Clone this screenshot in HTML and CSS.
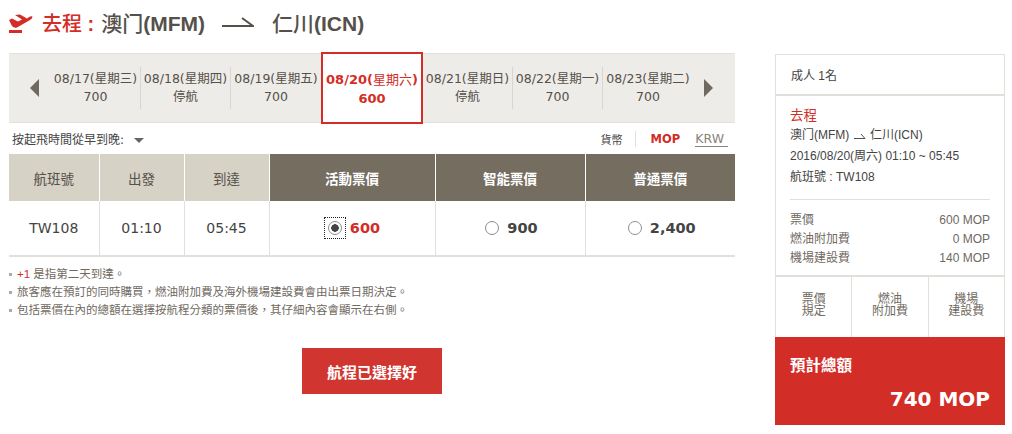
FILE: index.html
```html
<!DOCTYPE html>
<html lang="zh-Hant">

<head>
    <meta charset="UTF-8">
    <title>Select flight</title>
    <link rel="stylesheet" href="styles.css">
</head>

<body>
    <div class="page">
        <h1 class="route">
            <svg class="plane" width="24" height="22" viewBox="0 0 24 22">
                <path fill="#d32d27" d="M0 9 L3 7.500 L9 10.500 L13 8.500 L6 4 L11 3.500 L18 7.500 L21 5.500 Q23.500 4.800 23.500 6 Q23.500 7.500 21 9 L8 16.500 Q5 17.500 3 15 Z" />
                <rect fill="#d32d27" x="0" y="19" width="13" height="3" />
            </svg>
            <span class="route-label"><span class="cjk">去程</span> <b>:</b></span>
            <span class="route-city"><span class="cjk">澳门</span>(MFM)</span>
            <svg class="route-arrow" width="32" height="12" viewBox="0 0 32 12">
                <path fill="none" stroke="#55504a" stroke-width="2" d="M0 10 H31 L20 2" />
            </svg>
            <span class="route-city"><span class="cjk">仁川</span>(ICN)</span>
        </h1>

        <div class="columns">
            <div class="main">
                <div class="dates">
                    <div class="arrow arrow-left"></div>
                    <div class="date">08/17(<span class="wk">星期三</span>)<br>700</div>
                    <div class="date">08/18(<span class="wk">星期四</span>)<br><span class="wk">停航</span></div>
                    <div class="date">08/19(<span class="wk">星期五</span>)<br>700</div>
                    <div class="date date-active">08/20(<span class="wk">星期六</span>)<br>600</div>
                    <div class="date">08/21(<span class="wk">星期日</span>)<br><span class="wk">停航</span></div>
                    <div class="date">08/22(<span class="wk">星期一</span>)<br>700</div>
                    <div class="date">08/23(<span class="wk">星期二</span>)<br>700</div>
                    <div class="arrow arrow-right"></div>
                </div>

                <div class="tools">
                    <div class="sort">按起飛時間從早到晚: <span class="caret"></span></div>
                    <div class="currency">
                        <span class="currency-label">貨幣</span>
                        <span class="currency-on">MOP</span>
                        <span class="currency-off">KRW</span>
                    </div>
                </div>

                <table class="flights">
                    <tr>
                        <th class="col-no">航班號</th>
                        <th class="col-time">出發</th>
                        <th class="col-time">到達</th>
                        <th class="fare col-event">活動票價</th>
                        <th class="fare col-smart">智能票價</th>
                        <th class="fare col-normal">普通票價</th>
                    </tr>
                    <tr>
                        <td>TW108</td>
                        <td>01:10</td>
                        <td>05:45</td>
                        <td>
                            <div class="fare-cell"><span class="radio-focus"><span class="radio radio-on"></span></span><b class="price price-red">600</b></div>
                        </td>
                        <td>
                            <div class="fare-cell"><span class="radio"></span><b class="price">900</b></div>
                        </td>
                        <td>
                            <div class="fare-cell"><span class="radio"></span><b class="price">2,400</b></div>
                        </td>
                    </tr>
                </table>

                <ul class="notes">
                    <li><span class="plus">+1</span> 是指第二天到達。</li>
                    <li>旅客應在預訂的同時購買，燃油附加費及海外機場建設費會由出票日期決定。</li>
                    <li>包括票價在內的總額在選擇按航程分類的票價後，其仔細內容會顯示在右側。</li>
                </ul>

                <div class="actions">
                    <button class="confirm">航程已選擇好</button>
                </div>
            </div>

            <div class="side">
                <div class="box pax">成人 1名</div>
                <div class="box trip">
                    <div class="trip-title">去程</div>
                    <div class="trip-line trip-route">澳门(MFM)
                        <svg width="12" height="6" viewBox="0 0 12 6">
                            <path fill="none" stroke="#55504a" d="M0 5.500 H11 L7 1" />
                        </svg>
                        仁川(ICN)
                    </div>
                    <div class="trip-line">2016/08/20(周六) 01:10 ~ 05:45</div>
                    <div class="trip-line">航班號 : TW108</div>
                    <div class="costs">
                        <div class="cost"><span>票價</span><span>600 MOP</span></div>
                        <div class="cost"><span>燃油附加費</span><span>0 MOP</span></div>
                        <div class="cost"><span>機場建設費</span><span>140 MOP</span></div>
                    </div>
                </div>
                <div class="box rules">
                    <div class="rule">票價<br>規定</div>
                    <div class="rule">燃油<br>附加費</div>
                    <div class="rule">機場<br>建設費</div>
                </div>
                <div class="total">
                    <div class="total-label">預計總額</div>
                    <div class="total-value">740 MOP</div>
                </div>
            </div>
        </div>
    </div>
</body>

</html>
```

FILE: styles.css
```css
* {
    box-sizing: border-box;
}

body {
    margin: 0;
    background: white;
    color: #55504a;
    font-family: "DejaVu Sans", "Noto Sans CJK TC", sans-serif;
    font-size: 12px;
}

.page {
    width: 1012px;
    height: 434px;
    overflow: hidden;
}

.route {
    display: flex;
    align-items: center;
    height: 44px;
    margin: 0;
    padding-left: 9px;
    font-family: "Liberation Sans", "Noto Sans CJK TC", sans-serif;
    font-size: 21px;
    font-weight: bold;
}

.plane {
    margin-right: 9px;
}

.cjk {
    font-weight: 500;
}

.route-label {
    margin-right: 7px;
    color: #d32d27;
    font-size: 20px;
    font-weight: normal;
}

.route-city {
    font-weight: bold;
}

.route-arrow {
    margin: 0 18px 0 17px;
}

.columns {
    display: flex;
    padding-left: 9px;
}

.main {
    width: 726px;
}

.dates {
    display: flex;
    align-items: center;
    height: 70px;
    margin-top: 9px;
    background: #eeece8;
    border-top: 1px solid #e2e0da;
    border-bottom: 1px solid #e2e0da;
}

.arrow {
    width: 0;
    height: 0;
    border-top: 9px solid transparent;
    border-bottom: 9px solid transparent;
}

.arrow-left {
    margin: 0 12px 0 21px;
    border-right: 9px solid #6f695f;
}

.arrow-right {
    margin-left: 11px;
    border-left: 9px solid #6f695f;
}

.date {
    width: 90px;
    height: 42px;
    padding-top: 3px;
    border-right: 1px solid #d8d6d0;
    font-size: 12.500px;
    line-height: 18px;
    text-align: center;
    white-space: nowrap;
}

.date:nth-child(4),
.date:nth-last-child(2) {
    border-right: 0;
}

.wk {
    font-size: 12.500px;
}

.date-active {
    width: 102px;
    height: 72px;
    margin: -1px 0;
    padding-top: 16px;
    background: white;
    border: 2px solid #d32d27;
    color: #d32d27;
    font-weight: bold;
    font-size: 13px;
    line-height: 19px;
}

.date-active .wk {
    font-size: 13px;
    font-weight: normal;
}

.tools {
    display: flex;
    justify-content: space-between;
    align-items: center;
    height: 31px;
    padding: 0 7px 0 3px;
}

.sort {
    font-size: 12px;
    color: #444;
}

.caret {
    display: inline-block;
    margin-left: 6px;
    border-top: 5px solid #666;
    border-left: 5px solid transparent;
    border-right: 5px solid transparent;
    vertical-align: 1px;
}

.currency {
    display: flex;
    align-items: center;
    font-size: 11px;
}

.currency-label {
    padding-right: 12px;
    border-right: 1px solid #e2e0da;
    color: #444;
}

.currency-on {
    margin-left: 15px;
    color: #d32d27;
    font-weight: bold;
    font-size: 11.500px;
}

.currency-off {
    margin-left: 15px;
    padding-right: 4px;
    border-bottom: 1px solid #8a8378;
    color: #8a8378;
    font-size: 12.500px;
}

.flights {
    width: 726px;
    table-layout: fixed;
    border-collapse: collapse;
}

.flights th {
    height: 47px;
    padding: 0;
    background: #d7d2c6;
    border-left: 1px solid white;
    font-family: "Noto Sans CJK TC", sans-serif;
    font-size: 13.500px;
    font-weight: normal;
}

.flights th:first-child {
    border-left: 0;
}

.flights .fare {
    background: #746d60;
    color: white;
    font-weight: bold;
}

.col-no {
    width: 90px;
}

.col-time {
    width: 85px;
}

.col-event {
    width: 166px;
}

.col-smart,
.col-normal {
    width: 150px;
}

.flights td {
    height: 55px;
    padding: 0;
    border-left: 1px solid #e2e0da;
    border-bottom: 2px solid #e2e0da;
    font-size: 14px;
    text-align: center;
    color: #444;
}

.flights td:first-child {
    border-left: 0;
}

.fare-cell {
    display: flex;
    justify-content: center;
    align-items: center;
    padding-left: 3px;
}

.radio {
    display: block;
    width: 14px;
    height: 14px;
    margin-right: 8px;
    background: white;
    border: 1px solid #8e8e8e;
    border-radius: 50%;
}

.radio-on {
    margin: 3px;
    background: radial-gradient(circle, #444 3.500px, white 4px);
}

.radio-focus {
    display: block;
    width: 22px;
    height: 22px;
    margin: 0 4px 0 -3px;
    border: 1px dotted #222;
}

.price {
    font-size: 14.500px;
    font-weight: bold;
    color: #444;
}

.price-red {
    color: #d32d27;
}

.notes {
    margin: 8px 0 0;
    padding: 0;
    list-style: none;
    font-family: "Liberation Sans", "Noto Sans CJK TC", sans-serif;
    font-size: 11.500px;
    line-height: 18px;
    color: #6f695f;
}

.notes li {
    position: relative;
    padding-left: 8px;
}

.notes li::before {
    content: "";
    position: absolute;
    left: 0;
    top: 8px;
    width: 3px;
    height: 3px;
    background: #aaa;
}

.plus {
    color: #d32d27;
}

.actions {
    margin-top: 29px;
    padding-left: 293px;
}

.confirm {
    width: 140px;
    height: 46px;
    padding: 0;
    background: #d0352f;
    border: 0;
    color: white;
    font-family: "Noto Sans CJK TC", sans-serif;
    font-size: 15px;
    font-weight: bold;
}

.side {
    width: 230px;
    margin-left: 40px;
    margin-top: 10px;
    font-family: "Liberation Sans", "Noto Sans CJK TC", sans-serif;
    font-size: 12px;
}

.box {
    border-left: 1px solid #e2e0da;
    border-right: 1px solid #e2e0da;
}

.pax {
    height: 42px;
    padding: 11px 0 0 15px;
    border-top: 1px solid #e2e0da;
    border-bottom: 2px solid #e2e0da;
    color: #444;
}

.trip {
    height: 181px;
    padding: 11px 14px 0;
    border-bottom: 2px solid #e2e0da;
}

.trip-title {
    color: #d32d27;
    font-size: 13.500px;
    line-height: 18px;
}

.trip-line {
    height: 21px;
    line-height: 21px;
    color: #444;
    white-space: nowrap;
}

.trip-route svg {
    margin: 0 1px;
}

.costs {
    margin-top: 11px;
    padding-top: 11px;
    border-top: 1px solid #e2e0da;
    color: #6f695f;
}

.cost {
    display: flex;
    justify-content: space-between;
    height: 19px;
    line-height: 19px;
}

.rules {
    display: flex;
    height: 60px;
}

.rule {
    flex: 1;
    padding-top: 16px;
    border-left: 1px solid #e2e0da;
    color: #6f695f;
    line-height: 12px;
    text-align: center;
}

.rule:first-child {
    border-left: 0;
}

.total {
    height: 88px;
    padding: 16px 15px 0;
    background: #d32d27;
    color: white;
}

.total-label {
    font-size: 15.500px;
    font-weight: bold;
}

.total-value {
    margin-top: 12px;
    font-family: "DejaVu Sans", sans-serif;
    font-size: 20px;
    font-weight: bold;
    text-align: right;
}
```
